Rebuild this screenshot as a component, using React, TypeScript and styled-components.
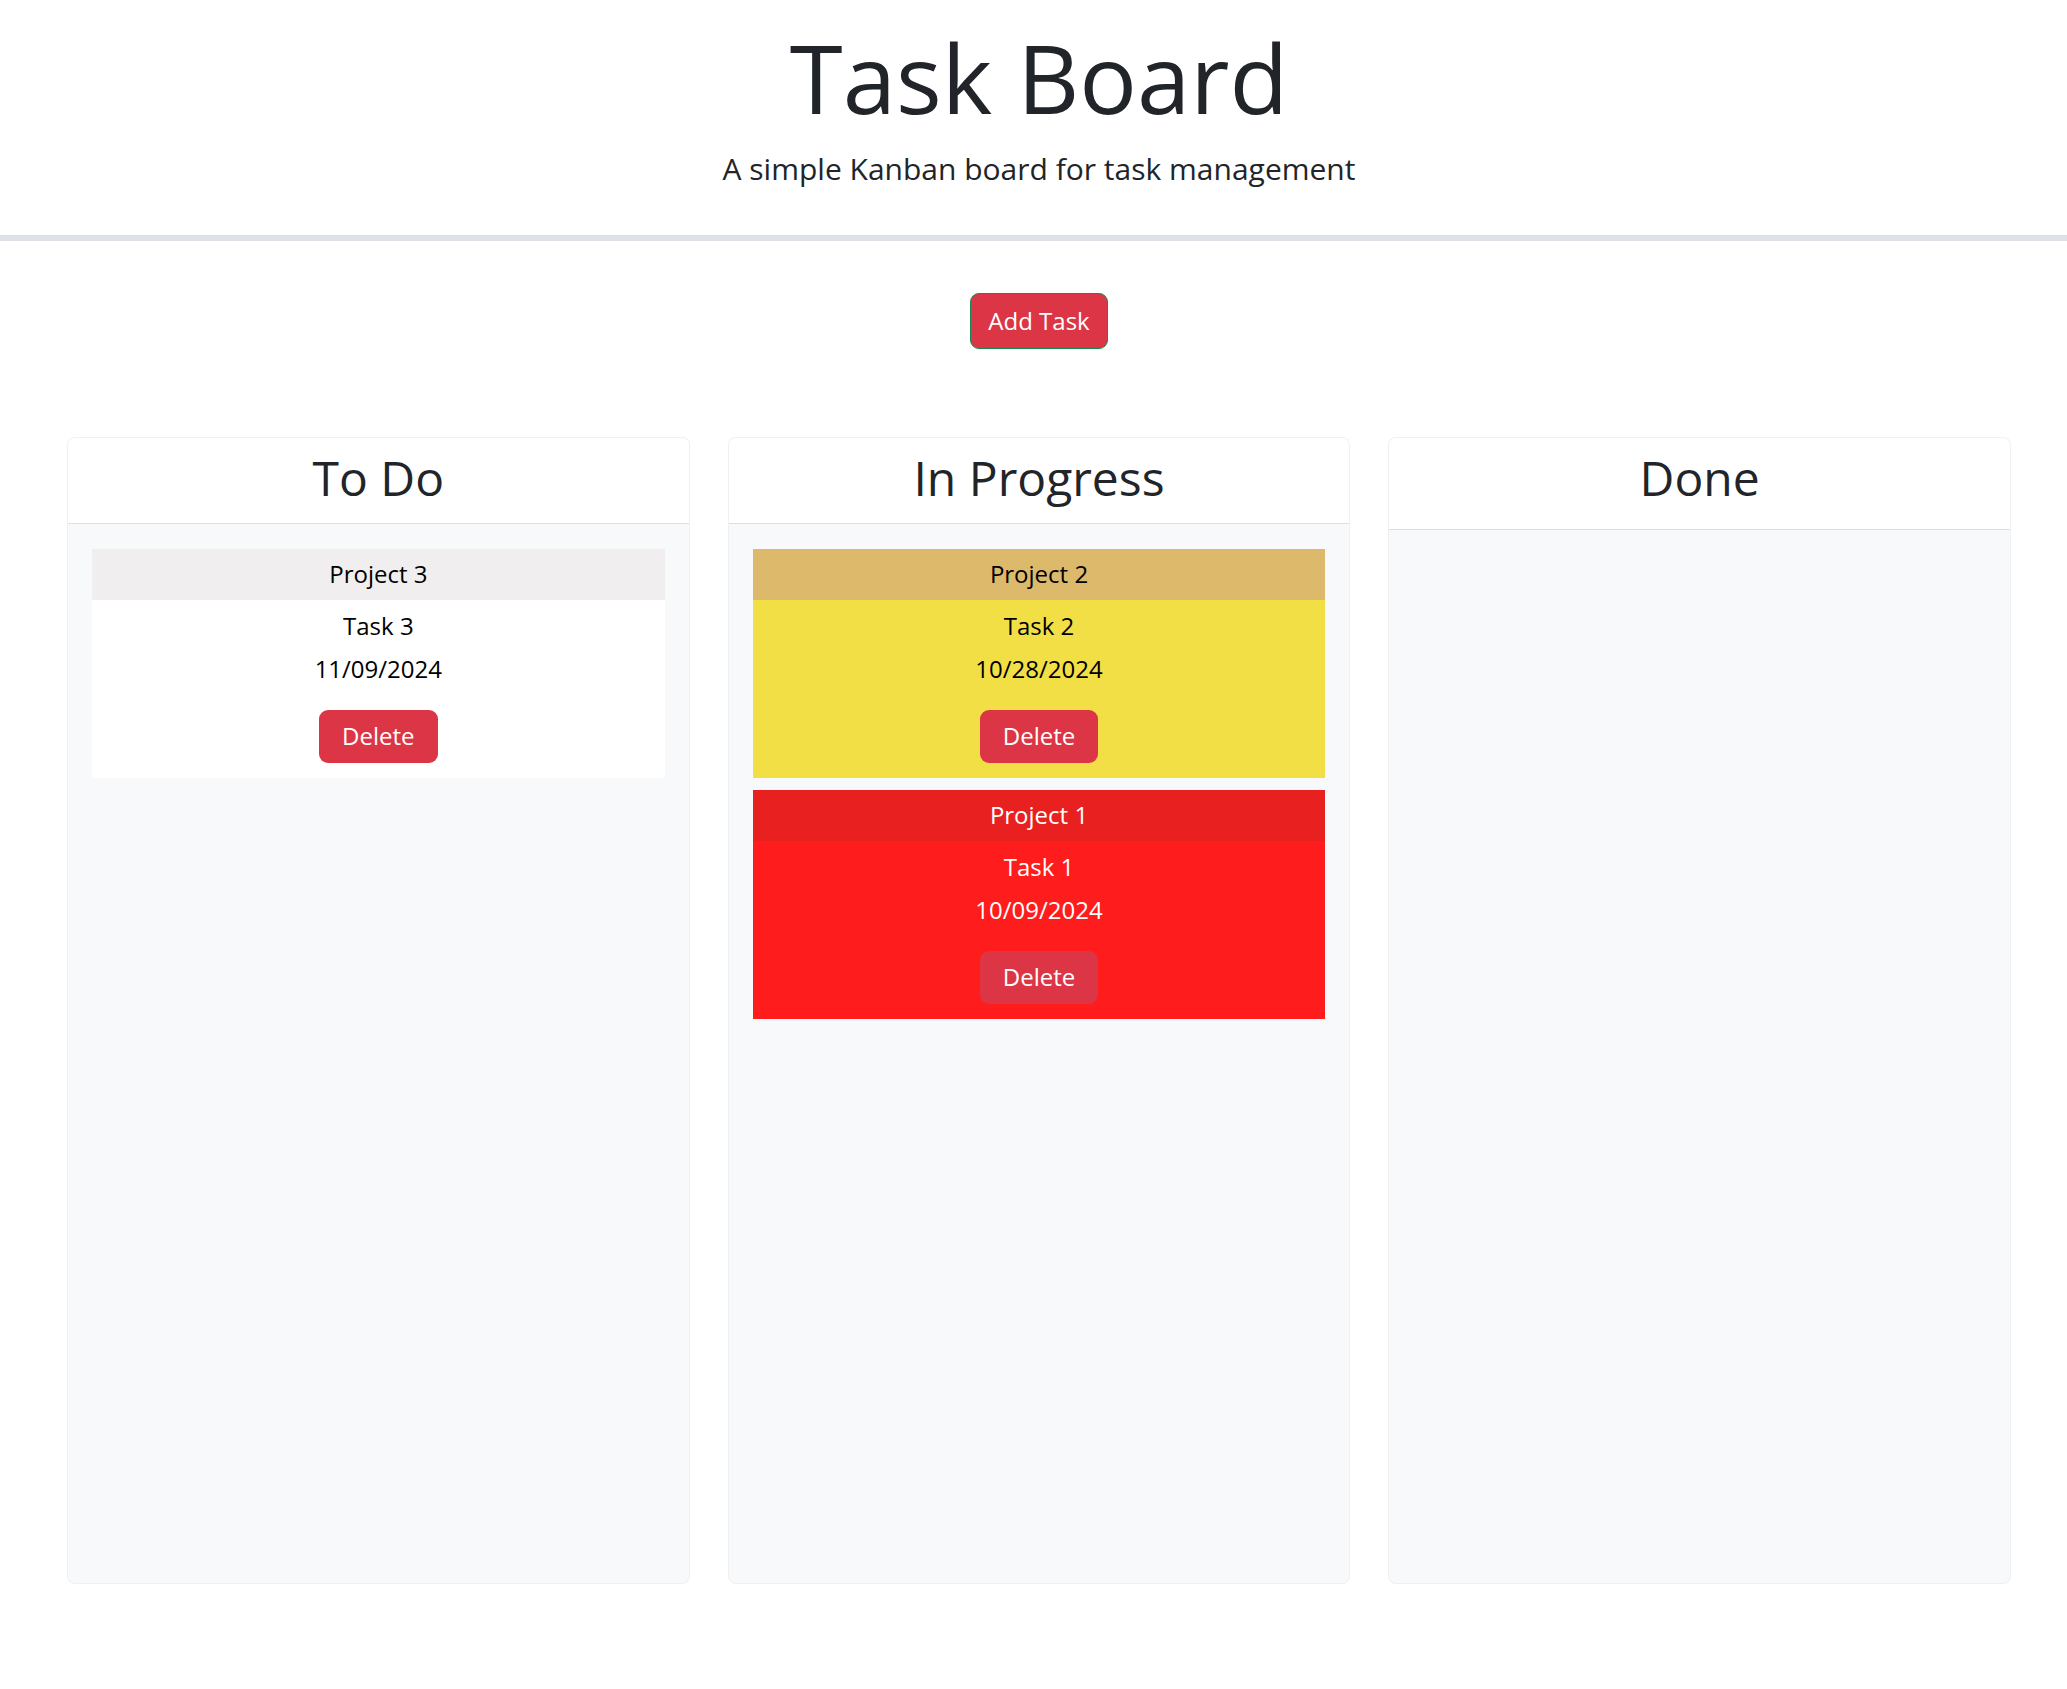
import React from "react";
import styled, { createGlobalStyle } from "styled-components";

const GlobalStyle = createGlobalStyle`
  html, body {
    margin: 0;
    padding: 0;
    background: #ffffff;
  }
  body {
    font-family: "Open Sans", "Liberation Sans", sans-serif;
    color: #212529;
  }
  *, *::before, *::after {
    box-sizing: border-box;
  }
`;

const Header = styled.header`
  text-align: center;
  padding: 19px 0 44px 11px;
  border-bottom: 6px solid #dee2e6;
  background: #ffffff;
`;

const Title = styled.h1`
  margin: 0 0 12px;
  font-size: 96px;
  font-weight: 400;
  line-height: 1.2;
  color: #212529;
`;

const Subtitle = styled.p`
  margin: 0;
  font-size: 30px;
  line-height: 1.5;
  color: #212529;
`;

const Toolbar = styled.div`
  display: flex;
  justify-content: center;
  padding: 52px 0 0 11px;
  margin-bottom: 88px;
`;

const AddButton = styled.button`
  height: 56px;
  padding: 0 17px;
  font-family: inherit;
  font-size: 24px;
  line-height: 36px;
  color: #ffffff;
  background: #dc3545;
  border: 1.5px solid #198754;
  border-radius: 9px;
  cursor: pointer;
`;

const Board = styled.main`
  display: grid;
  grid-template-columns: repeat(3, 1fr);
  column-gap: 38px;
  padding: 0 56px 0 67px;
`;

const Column = styled.section`
  display: flex;
  flex-direction: column;
  height: 1147px;
  background: #f8f9fa;
  border: 1px solid rgba(0, 0, 0, 0.035);
  border-radius: 8px;
  overflow: hidden;
`;

const ColumnHeader = styled.div<{ $tall?: boolean }>`
  background: #ffffff;
  border-bottom: 1px solid #dfdfdf;
  padding: 11px 0 ${(p) => (p.$tall ? 22 : 16)}px;
  text-align: center;
`;

const ColumnTitle = styled.h2`
  margin: 0;
  font-size: 48px;
  font-weight: 400;
  line-height: 1.2;
  color: #212529;
`;

const ColumnBody = styled.div`
  flex: 1;
  padding: 25px 24px;
`;

const Card = styled.article<{ $bg: string; $fg: string }>`
  background: ${(p) => p.$bg};
  color: ${(p) => p.$fg};
  margin-bottom: 12px;
  text-align: center;
`;

const CardHeader = styled.div<{ $bg: string }>`
  background: ${(p) => p.$bg};
  padding: 7px 24px 8px;
  font-size: 24px;
  line-height: 36px;
`;

const CardBody = styled.div`
  padding: 8px 24px 15px;
`;

const TaskTitle = styled.p`
  margin: 0 0 7px;
  font-size: 24px;
  line-height: 36px;
`;

const TaskDate = styled.p`
  margin: 0 0 23px;
  font-size: 24px;
  line-height: 36px;
`;

const DeleteButton = styled.button`
  height: 53px;
  padding: 0 23px;
  font-family: inherit;
  font-size: 24px;
  line-height: 36px;
  color: #ffffff;
  background: #dc3545;
  border: none;
  border-radius: 9px;
  cursor: pointer;
`;

type Task = {
  id: number;
  project: string;
  title: string;
  date: string;
  header: string;
  body: string;
  fg: string;
};

type ColumnData = {
  name: string;
  tall?: boolean;
  tasks: Task[];
};

const columns: ColumnData[] = [
  {
    name: "To Do",
    tasks: [
      {
        id: 3,
        project: "Project 3",
        title: "Task 3",
        date: "11/09/2024",
        header: "#f0eeef",
        body: "#ffffff",
        fg: "#000000",
      },
    ],
  },
  {
    name: "In Progress",
    tasks: [
      {
        id: 2,
        project: "Project 2",
        title: "Task 2",
        date: "10/28/2024",
        header: "#dcb96b",
        body: "#f2df45",
        fg: "#000000",
      },
      {
        id: 1,
        project: "Project 1",
        title: "Task 1",
        date: "10/09/2024",
        header: "#e8201f",
        body: "#ff1c1c",
        fg: "#ffffff",
      },
    ],
  },
  { name: "Done", tall: true, tasks: [] },
];

export default function App() {
  return (
    <>
      <GlobalStyle />
      <Header>
        <Title>Task Board</Title>
        <Subtitle>A simple Kanban board for task management</Subtitle>
      </Header>
      <Toolbar>
        <AddButton type="button">Add Task</AddButton>
      </Toolbar>
      <Board>
        {columns.map((col) => (
          <Column key={col.name}>
            <ColumnHeader $tall={col.tall}>
              <ColumnTitle>{col.name}</ColumnTitle>
            </ColumnHeader>
            <ColumnBody>
              {col.tasks.map((t) => (
                <Card key={t.id} $bg={t.body} $fg={t.fg}>
                  <CardHeader $bg={t.header}>{t.project}</CardHeader>
                  <CardBody>
                    <TaskTitle>{t.title}</TaskTitle>
                    <TaskDate>{t.date}</TaskDate>
                    <DeleteButton type="button">Delete</DeleteButton>
                  </CardBody>
                </Card>
              ))}
            </ColumnBody>
          </Column>
        ))}
      </Board>
    </>
  );
}
